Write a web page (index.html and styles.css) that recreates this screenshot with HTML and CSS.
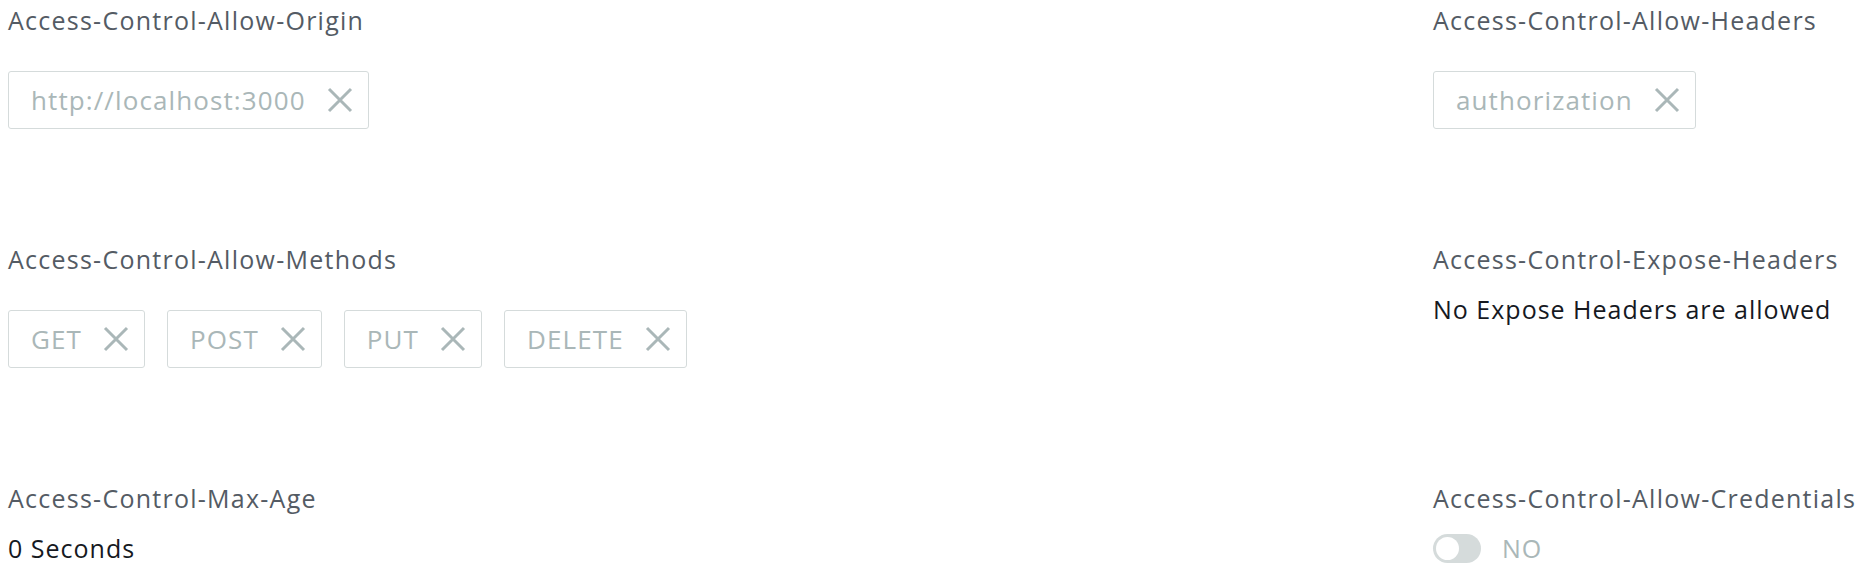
FILE: index.html
```html
<!DOCTYPE html>
<html lang="en">
<head>
<meta charset="utf-8">
<title>CORS</title>
<link rel="stylesheet" href="styles.css">
</head>
<body>
<main class="cors">
  <section class="field">
    <div class="label">Access-Control-Allow-Origin</div>
    <div class="tokens">
      <span class="token">http://localhost:3000<svg class="x" viewBox="0 0 26 26"><path d="M2 2L24 24M24 2L2 24"/></svg></span>
    </div>
  </section>
  <section class="field">
    <div class="label">Access-Control-Allow-Headers</div>
    <div class="tokens">
      <span class="token">authorization<svg class="x" viewBox="0 0 26 26"><path d="M2 2L24 24M24 2L2 24"/></svg></span>
    </div>
  </section>
  <section class="field">
    <div class="label">Access-Control-Allow-Methods</div>
    <div class="tokens">
      <span class="token upper">GET<svg class="x" viewBox="0 0 26 26"><path d="M2 2L24 24M24 2L2 24"/></svg></span>
      <span class="token upper">POST<svg class="x" viewBox="0 0 26 26"><path d="M2 2L24 24M24 2L2 24"/></svg></span>
      <span class="token upper">PUT<svg class="x" viewBox="0 0 26 26"><path d="M2 2L24 24M24 2L2 24"/></svg></span>
      <span class="token upper">DELETE<svg class="x" viewBox="0 0 26 26"><path d="M2 2L24 24M24 2L2 24"/></svg></span>
    </div>
  </section>
  <section class="field">
    <div class="label">Access-Control-Expose-Headers</div>
    <div class="value">No Expose Headers are allowed</div>
  </section>
  <section class="field">
    <div class="label">Access-Control-Max-Age</div>
    <div class="value">0 Seconds</div>
  </section>
  <section class="field">
    <div class="label">Access-Control-Allow-Credentials</div>
    <div class="value toggle-row">
      <span class="toggle"><span class="knob"></span></span>
      <span class="toggle-text">NO</span>
    </div>
  </section>
</main>
</body>
</html>
```
FILE: styles.css
```css
html, body {
  margin: 0;
  padding: 0;
  background: #ffffff;
}
body {
  font-family: "Open Sans", "Noto Sans", sans-serif;
  font-size: 25px;
  color: #16191f;
}
.cors {
  display: grid;
  grid-template-columns: 1425px 1fr;
  row-gap: 113px;
  padding: 3px 8px 0 8px;
  align-items: start;
}
.label {
  color: #545b64;
  line-height: 34px;
  letter-spacing: 1.25px;
}
.tokens {
  display: flex;
  gap: 22px;
  margin-top: 34px;
}
.token {
  display: inline-flex;
  align-items: center;
  box-sizing: border-box;
  height: 58px;
  padding: 0 15px 0 22px;
  gap: 21px;
  border: 1px solid #d5dbdb;
  border-radius: 3px;
  color: #aab7b8;
  font-size: 26px;
  letter-spacing: 1.1px;
}
.x {
  width: 26px;
  height: 26px;
  flex: none;
}
.x path {
  fill: none;
  stroke: #aab7b8;
  stroke-width: 3;
}
.value {
  line-height: 34px;
  margin-top: 16px;
  letter-spacing: 1px;
}
.toggle-row {
  display: flex;
  align-items: center;
}
.toggle {
  position: relative;
  display: inline-block;
  width: 48px;
  height: 29px;
  border-radius: 15px;
  background: #d5dbdb;
}
.knob {
  position: absolute;
  left: 3px;
  top: 3px;
  width: 23px;
  height: 23px;
  border-radius: 50%;
  background: #ffffff;
}
.toggle-text {
  margin-left: 21px;
  color: #aab7b8;
}
```
